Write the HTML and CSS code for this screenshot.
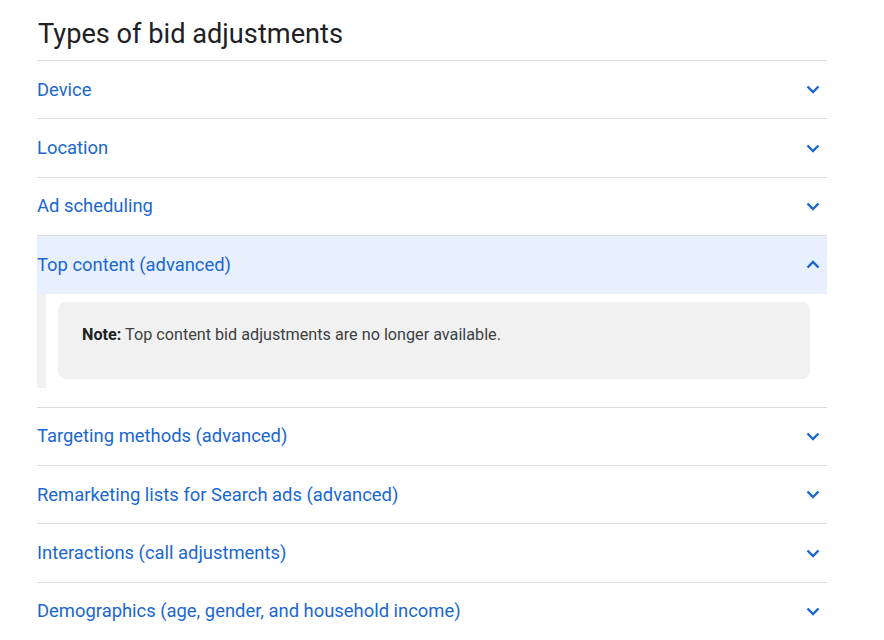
FILE: index.html
```html
<!DOCTYPE html>
<html>
<head>
<meta charset="utf-8">
<link rel="stylesheet" href="styles.css">
</head>
<body>
<div class="page">
  <h2 class="title">Types of bid adjustments</h2>
  <div class="accordion">
    <div class="item"><div class="head"><span class="label">Device</span><svg class="chev" viewBox="0 0 14 9"><path d="M1.5 1.5 L7 7 L12.5 1.5" /></svg></div></div>
    <div class="item"><div class="head"><span class="label">Location</span><svg class="chev" viewBox="0 0 14 9"><path d="M1.5 1.5 L7 7 L12.5 1.5" /></svg></div></div>
    <div class="item"><div class="head"><span class="label">Ad scheduling</span><svg class="chev" viewBox="0 0 14 9"><path d="M1.5 1.5 L7 7 L12.5 1.5" /></svg></div></div>
    <div class="item open">
      <div class="head"><span class="label">Top content (advanced)</span><svg class="chev" viewBox="0 0 14 9"><path d="M1.5 7.5 L7 2 L12.5 7.5" /></svg></div>
      <div class="body">
        <div class="note"><b>Note:</b> Top content bid adjustments are no longer available.</div>
      </div>
    </div>
    <div class="item"><div class="head"><span class="label">Targeting methods (advanced)</span><svg class="chev" viewBox="0 0 14 9"><path d="M1.5 1.5 L7 7 L12.5 1.5" /></svg></div></div>
    <div class="item"><div class="head"><span class="label">Remarketing lists for Search ads (advanced)</span><svg class="chev" viewBox="0 0 14 9"><path d="M1.5 1.5 L7 7 L12.5 1.5" /></svg></div></div>
    <div class="item"><div class="head"><span class="label">Interactions (call adjustments)</span><svg class="chev" viewBox="0 0 14 9"><path d="M1.5 1.5 L7 7 L12.5 1.5" /></svg></div></div>
    <div class="item"><div class="head"><span class="label">Demographics (age, gender, and household income)</span><svg class="chev" viewBox="0 0 14 9"><path d="M1.5 1.5 L7 7 L12.5 1.5" /></svg></div></div>
  </div>
</div>
</body>
</html>
```
FILE: styles.css
```css
html, body {
  margin: 0;
  padding: 0;
  background: #ffffff;
}
.page {
  width: 790px;
  margin-left: 37px;
  font-family: Roboto, "Liberation Sans", Arial, sans-serif;
}
.title {
  margin: 0;
  padding: 17px 0 0 1px;
  height: 60px;
  box-sizing: border-box;
  font-size: 27.2px;
  font-weight: 400;
  line-height: 34px;
  color: #202124;
}
.item {
  border-top: 1px solid #dadce0;
}
.head {
  height: 57.4px;
  display: flex;
  align-items: center;
  justify-content: space-between;
  padding-right: 7px;
}
.label {
  font-size: 18.4px;
  color: #1a67d2;
  line-height: 24px;
}
.chev {
  width: 14px;
  height: 9px;
  fill: none;
  stroke: #1a67d2;
  stroke-width: 2.4;
}
.open .head {
  background: #e8f0fe;
}
.body {
  border-left: 9px solid #f1f1f1;
  padding: 8px 17px 9px 12px;
  margin-bottom: 19px;
}
.note {
  background: #f1f1f1;
  border-radius: 8px;
  padding: 23px 24px 34px 24px;
  font-size: 16.2px;
  line-height: 20px;
  color: #3c4043;
}
.note b {
  font-weight: 700;
  color: #202124;
}
```
